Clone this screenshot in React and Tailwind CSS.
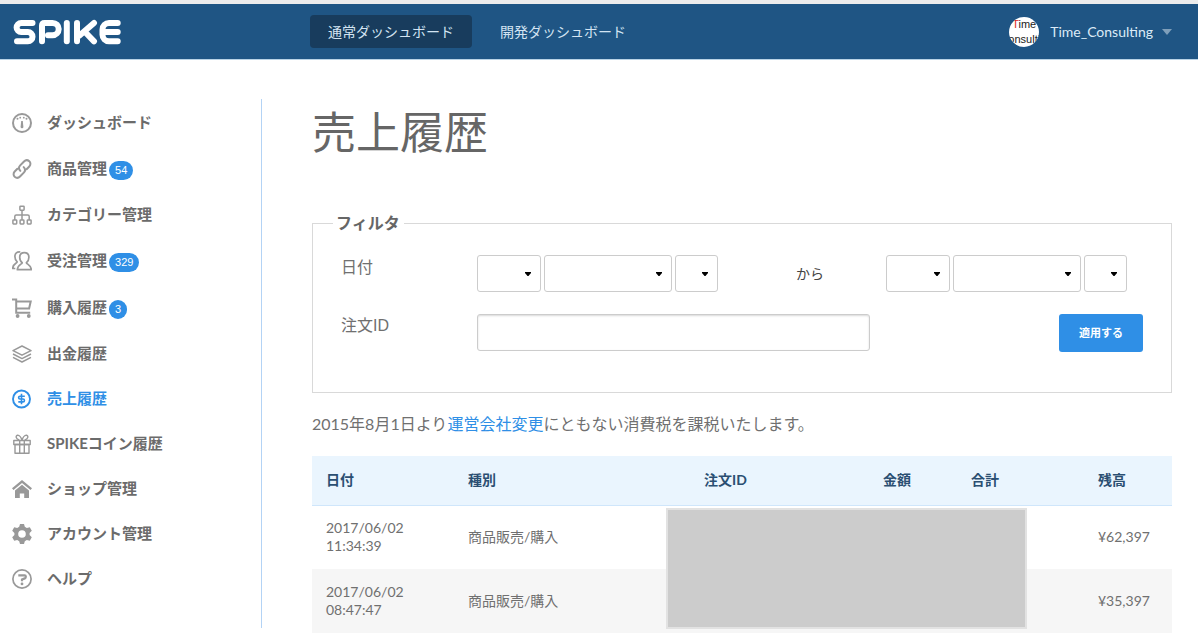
import React from "react";

const svgProps = {
  viewBox: "0 0 20 20",
  className: "w-5 h-5 shrink-0",
  fill: "none",
  stroke: "currentColor",
  strokeWidth: 1.7,
  "aria-hidden": true,
};

const icons = {
  dashboard: (
    <svg {...svgProps}>
      <circle cx="10" cy="10" r="9" strokeWidth="2" />
      <path d="M9.200 8h1.600l.6 5.900a1.400 1.400 0 0 1-2.800 0z" fill="currentColor" stroke="none" />
      <g fill="currentColor" stroke="none">
        <circle cx="5.500" cy="5.800" r="1" />
        <circle cx="8.200" cy="4.700" r="0.900" />
        <circle cx="11.800" cy="4.700" r="0.900" />
        <circle cx="14.500" cy="5.800" r="1" />
      </g>
    </svg>
  ),
  link: (
    <svg {...svgProps} strokeWidth="2" strokeLinecap="round">
      <path d="M8.300 11.900C6.600 10.200 6.700 8 8.200 6.400L12 2.500c1.500-1.500 3.700-1.600 5.300-.2 1.500 1.400 1.500 3.700 0 5.200l-2.700 2.800" />
      <path d="M11.700 8.100c1.700 1.700 1.600 3.900.1 5.500L8 17.500c-1.500 1.500-3.700 1.600-5.300.2-1.500-1.400-1.500-3.700 0-5.200l2.700-2.800" />
    </svg>
  ),
  tree: (
    <svg {...svgProps} strokeWidth="1.500">
      <rect x="7.900" y="1.200" width="4.200" height="4" rx="0.600" />
      <rect x="0.900" y="15" width="3.800" height="3.900" rx="0.600" />
      <rect x="8.100" y="15" width="3.800" height="3.900" rx="0.600" />
      <rect x="15.300" y="15" width="3.800" height="3.900" rx="0.600" />
      <path d="M10 5.500V15M2.800 15v-3.500a1.500 1.500 0 0 1 1.500-1.500h11.400a1.500 1.500 0 0 1 1.500 1.500V15" />
    </svg>
  ),
  users: (
    <svg {...svgProps} strokeLinejoin="round">
      <path d="M10.200 11.800C8.500 10.500 7.700 8.700 7.700 6.300 7.700 3.500 9.300 1.600 12.300 1.600s4.600 1.900 4.600 4.700c0 2.400-.8 4.200-2.500 5.500.3 1.500 4.500 1.800 4.900 6.900H5.300c.4-5.100 4.600-5.400 4.900-6.900z" />
      <path d="M8.300 1C5 .6 2.900 2.300 2.900 5.600c0 2.200.7 4 2.300 5.300C4.800 12.500 1 12.500.7 17.500h2.600" />
    </svg>
  ),
  cart: (
    <svg {...svgProps} strokeWidth="2">
      <path d="M0 1.500h4.200v13.200h14" />
      <path d="M4.500 3.500h14.200l-1.600 7H4.500" />
      <g fill="currentColor" stroke="none">
        <circle cx="5.600" cy="18" r="1.900" />
        <circle cx="16.800" cy="18" r="1.900" />
      </g>
    </svg>
  ),
  layers: (
    <svg {...svgProps} strokeWidth="1.500" strokeLinejoin="round">
      <path d="M10 2l9 4.600-9 4.600-9-4.600z" />
      <path d="M1 10l9 4.600 9-4.600M1 13.400L10 18l9-4.600" />
    </svg>
  ),
  sales: (
    <svg {...svgProps} strokeWidth="1.900">
      <circle cx="9.500" cy="10" r="8.500" />
      <path d="M12.800 7.200H8a1.400 1.400 0 0 0 0 2.800h3a1.400 1.400 0 0 1 0 2.900H6.300M9.500 4.800v10.400" strokeWidth="1.600" />
    </svg>
  ),
  gift: (
    <svg {...svgProps} strokeWidth="1.400" strokeLinejoin="round">
      <rect x="1.800" y="6.500" width="16.400" height="4" />
      <path d="M3 10.500h14v8.700H3zM7.700 6.500v12.700M12.300 6.500v12.700" />
      <path d="M10 6.500C9.300 3.300 7.300 1 5.400 1.300 3.400 1.700 3.600 5 7.300 5.900M10 6.500c.7-3.200 2.700-5.500 4.600-5.200 2 .4 1.800 3.700-1.900 4.600" />
    </svg>
  ),
  home: (
    <svg {...svgProps} fill="currentColor" stroke="none">
      <path d="M10 1l10 8.200-1.500 1.700L10 4 1.500 10.900 0 9.200z" />
      <path d="M10 5.700l7 5.700v7.600h-4.800v-4.600H7.800V19H3v-7.600z" />
    </svg>
  ),
  gear: (
    <svg {...svgProps} fill="currentColor" stroke="none">
      <path
        fillRule="evenodd"
        d="M8 0h4l.8 2.800 2 1.200 3-.8 2 3.500L17.600 9v2l2.200 2.300-2 3.500-3-.8-2 1.200L12 20H8l-.8-2.800-2-1.200-3 .8-2-3.500L2.400 11V9L.2 6.700l2-3.500 3 .8 2-1.200zM10 6.200a3.800 3.800 0 1 0 0 7.600 3.800 3.800 0 0 0 0-7.600z"
      />
    </svg>
  ),
  help: (
    <svg {...svgProps}>
      <circle cx="10" cy="10" r="9.100" />
      <path d="M6.300 6.300h6.300c1.600 0 1.600 2.600.3 3.100L10 10.500v1.800" strokeWidth="2.200" />
      <circle cx="10" cy="14.900" r="1.400" fill="currentColor" stroke="none" />
    </svg>
  ),
};

const menu = [
  { icon: "dashboard", label: "ダッシュボード" },
  { icon: "link", label: "商品管理", badge: "54" },
  { icon: "tree", label: "カテゴリー管理" },
  { icon: "users", label: "受注管理", badge: "329" },
  { icon: "cart", label: "購入履歴", badge: "3" },
  { icon: "layers", label: "出金履歴" },
  { icon: "sales", label: "売上履歴", active: true },
  { icon: "gift", label: "SPIKEコイン履歴" },
  { icon: "home", label: "ショップ管理" },
  { icon: "gear", label: "アカウント管理" },
  { icon: "help", label: "ヘルプ" },
];

function Logo() {
  return (
    <svg
      viewBox="13 19 109 26"
      className="w-[109px] h-[26px]"
      fill="none"
      stroke="#fff"
      strokeWidth="6"
      strokeLinecap="round"
      strokeLinejoin="round"
      role="img"
      aria-label="SPIKE"
    >
      <path d="M32.500 22.900H21.200a4.600 4.600 0 0 0 0 9.200h6.700a4.600 4.600 0 0 1 0 9.200H17" />
      <path d="M42 41.300V25.500q0-2.600 2.600-2.600H52.500a6.200 6.200 0 0 1 0 12.400H48" />
      <path d="M66.800 22.900v18.400" />
      <path d="M77 22.900v18.400M94 22.900L79.500 35.500M86 33l8 8.300" />
      <path d="M117.700 22.900H109a6.500 6.500 0 0 0-6.500 6.500v5.400a6.500 6.500 0 0 0 6.500 6.500h8.700M104 32.100h13.700" />
    </svg>
  );
}

function Header() {
  return (
    <header className="flex h-[60px] items-center border-t-4 border-b border-t-[#ececec] border-b-[#b9d3e6] bg-[#1f5584] pl-[13px] pr-[26px]">
      <a href="#" className="w-[297px] shrink-0">
        <Logo />
      </a>
      <nav className="flex flex-1 gap-[10px] text-sm text-[#d3e4f2]">
        <a href="#" className="rounded bg-[#183c5d] px-[18px] leading-[33px]">
          通常ダッシュボード
        </a>
        <a href="#" className="rounded px-[18px] leading-[33px]">
          開発ダッシュボード
        </a>
      </nav>
      <button type="button" className="flex items-center text-sm text-[#dcebf7]">
        <span className="flex h-[30px] w-[30px] flex-col items-center justify-center overflow-hidden rounded-full bg-white font-['Liberation_Sans',sans-serif] text-[11px] leading-[15px] text-[#222]">
          <span>
            <span className="text-[#e02b20]">T</span>ime
          </span>
          <span>onsulti</span>
        </span>
        <span className="ml-[11px]">Time_Consulting</span>
        <svg viewBox="0 0 10 6" className="ml-[9px] h-[6px] w-[10px]" fill="#7f9fba" aria-hidden>
          <path d="M0 0h10L5 6z" />
        </svg>
      </button>
    </header>
  );
}

function Sidebar() {
  return (
    <nav className="w-[262px] shrink-0 self-start border-r border-[#b3d3f5] pt-px pb-[27px] pl-3">
      <ul>
        {menu.map((m) => (
          <li key={m.label}>
            <a
              href="#"
              className={`flex items-center text-[15px] font-bold ${m.badge ? "h-[47px]" : "h-[45px]"} ${
                m.active ? "text-[#2f8fe6]" : "text-[#6b6b6b]"
              }`}
            >
              <span className={m.active ? "text-[#2f8fe6]" : "text-[#999]"}>{icons[m.icon]}</span>
              <span className="ml-[15px]">{m.label}</span>
              {m.badge && (
                <span className="mt-1 ml-[2px] rounded-full bg-[#2f8fe6] px-[6px] font-['Liberation_Sans',sans-serif] text-[11px] leading-[19px] font-normal text-white">
                  {m.badge}
                </span>
              )}
            </a>
          </li>
        ))}
      </ul>
    </nav>
  );
}

function Select({ label, width }) {
  return (
    <span className={`relative ${width}`}>
      <select
        aria-label={label}
        className="block h-[37px] w-full appearance-none rounded-[3px] border border-[#ccc] bg-white px-2 text-sm"
      >
        <option value=""></option>
      </select>
      <svg
        viewBox="0 0 6 4"
        className="pointer-events-none absolute top-[17px] right-[10px] h-1 w-[6px]"
        fill="#000"
        aria-hidden
      >
        <path d="M0 0h6v1L3.500 4h-1L0 1z" />
      </svg>
    </span>
  );
}

function DateGroup({ prefix }) {
  return (
    <div className="flex gap-[3px]">
      <Select label={`${prefix} 年`} width="w-16" />
      <Select label={`${prefix} 月`} width="w-32" />
      <Select label={`${prefix} 日`} width="w-[43px]" />
    </div>
  );
}

function Filter() {
  return (
    <fieldset className="mt-[46px] border border-[#d9d9d9] pr-7 pb-10 pl-7">
      <legend className="-ml-2 pr-1 pl-[3px] text-base leading-6 font-bold">フィルタ</legend>
      <div className="flex items-start pt-5 pr-4">
        <span className="w-[136px] shrink-0 leading-6 text-[#707070]">日付</span>
        <DateGroup prefix="開始" />
        <span className="flex-1 pl-4 text-center text-sm leading-[37px] text-[#444]">から</span>
        <DateGroup prefix="終了" />
      </div>
      <div className="mt-[22px] flex items-start">
        <label
          htmlFor="order-id"
          className="w-[136px] shrink-0 font-['Liberation_Sans','Noto_Sans_CJK_JP',sans-serif] leading-6 text-[#707070]"
        >
          注文ID
        </label>
        <div className="flex flex-1 items-start justify-between">
          <input
            id="order-id"
            type="text"
            className="h-[37px] w-[59%] rounded-[3px] border border-[#ccc] bg-white px-2 text-sm shadow-[inset_0_1px_2px_rgba(0,0,0,0.15)]"
          />
          <button
            type="button"
            className="h-[38px] w-[84px] rounded-[3px] bg-[#2f8fe6] text-[11px] font-bold text-white"
          >
            適用する
          </button>
        </div>
      </div>
    </fieldset>
  );
}

const rows = [
  { date: "2017/06/02", time: "11:34:39", type: "商品販売/購入", balance: "¥62,397" },
  { date: "2017/06/02", time: "08:47:47", type: "商品販売/購入", balance: "¥35,397" },
];

function SalesTable() {
  return (
    <div className="relative mt-5">
      <table className="w-full table-fixed text-left text-sm leading-[18px]">
        <thead>
          <tr className="h-[49px] border-b border-[#cfe6fb] bg-[#eaf5fe] text-[#2b4f72]">
            <th className="w-[142px] px-[14px]">日付</th>
            <th className="w-[236px] px-[14px]">種別</th>
            <th className="w-[179px] px-[14px]">注文ID</th>
            <th className="w-[88px] px-[14px]">金額</th>
            <th className="w-[127px] px-[14px]">合計</th>
            <th className="w-[88px] px-[14px]">残高</th>
          </tr>
        </thead>
        <tbody className="text-[#707070]">
          {rows.map((r) => (
            <tr key={r.time} className="h-16 even:bg-[#f6f6f6]">
              <td className="px-[14px]">
                {r.date}
                <br />
                {r.time}
              </td>
              <td className="px-[14px]">{r.type}</td>
              <td></td>
              <td></td>
              <td></td>
              <td className="px-[14px]">{r.balance}</td>
            </tr>
          ))}
        </tbody>
      </table>
      <div className="absolute top-[52px] right-[145px] h-[121px] w-[361px] border-2 border-[#e2e2e2] bg-[#ccc]"></div>
    </div>
  );
}

export default function App() {
  return (
    <div className="bg-white font-['Lato','Noto_Sans_CJK_JP',sans-serif] text-[#666]" lang="ja">
      <Header />
      <div className="flex pt-[39px]">
        <Sidebar />
        <main className="min-w-0 flex-1 pr-[26px] pl-[50px]">
          <h1 className="text-[44px] leading-[66px] font-normal">売上履歴</h1>
          <Filter />
          <p className="mt-[19px] text-base leading-6 text-[#707070]">
            2015年8月1日より
            <a href="#" className="text-[#2f8fe6]">
              運営会社変更
            </a>
            にともない消費税を課税いたします。
          </p>
          <SalesTable />
        </main>
      </div>
    </div>
  );
}
